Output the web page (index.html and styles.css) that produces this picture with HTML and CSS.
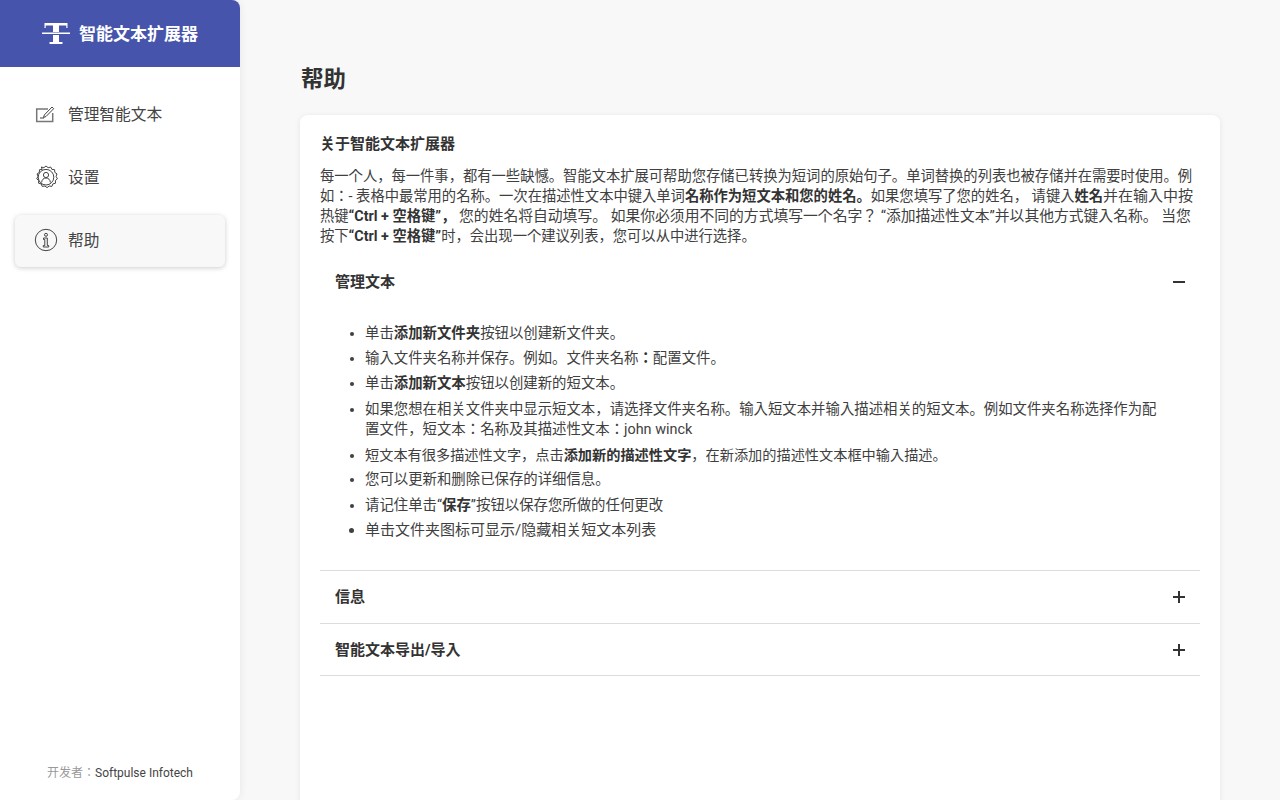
FILE: index.html
```html
<!DOCTYPE html>
<html lang="ja">
<head>
<meta charset="utf-8">
<title>智能文本扩展器</title>
<link rel="stylesheet" href="styles.css">
</head>
<body>
<div class="app">
  <aside class="sidebar">
    <div class="brand">
      <svg class="brand-icon" viewBox="0 0 28 24" width="28" height="24" aria-hidden="true">
        <path class="logo-fill" d="M2.500 1h23v5h-1.200V3.600H17v6.400h-6V3.600H3.700V6H2.500z"/>
        <path class="logo-fill" d="M0 10.500h28v1.500H0z"/>
        <path class="logo-fill" d="M11 13h6v7h3.500v2H7.500v-2H11z"/>
      </svg>
      <span class="brand-name">智能文本扩展器</span>
    </div>
    <nav class="nav">
      <a class="nav-item">
        <svg class="nav-icon" viewBox="0 0 20 20" width="20" height="20" aria-hidden="true">
          <path class="line thick" d="M13 5H1.700v12.500h16V9"/>
          <path class="line" d="M8.500 13.500l.8-2.500L17 3l1.700 1.700L11 12.500z"/>
          <path class="line" d="M5 14h4"/>
        </svg>
        <span class="nav-label">管理智能文本</span>
      </a>
      <a class="nav-item">
        <svg class="nav-icon gear" viewBox="0 0 24 24" width="24" height="24" aria-hidden="true">
          <path class="line" d="M12 1l2.100 1.700 2.600-.7 1.200 2.400 2.700.3.200 2.700 2.200 1.500-.9 2.500 1.300 2.400-2 1.700.1 2.700-2.600.7-1 2.500-2.700-.4-2.200 1.600-2.100-1.600-2.700.4-1-2.500-2.600-.7.100-2.700-2-1.700 1.300-2.400-.9-2.500 2.200-1.500.2-2.700 2.700-.3L7.300 2l2.600.7z"/>
          <circle class="line" cx="12" cy="12.200" r="7.800"/>
          <circle class="line" cx="12" cy="10" r="2.600"/>
          <path class="line" d="M7.600 17.500c.3-2.900 2-4.500 4.400-4.500s4.100 1.600 4.400 4.500"/>
        </svg>
        <span class="nav-label">设置</span>
      </a>
      <a class="nav-item active">
        <svg class="nav-icon gear" viewBox="0 0 24 24" width="24" height="24" aria-hidden="true">
          <circle class="line" cx="12" cy="12" r="10.700"/>
          <circle class="line" cx="12" cy="6.800" r="1.500"/>
          <path class="line" d="M9.500 10h3.800v7.500h1.400v1.500H9.300v-1.500h1.500v-6H9.500z"/>
        </svg>
        <span class="nav-label">帮助</span>
      </a>
    </nav>
    <footer class="credit"><span class="credit-label">开发者：</span><span>Softpulse Infotech</span></footer>
  </aside>
  <main class="main">
    <h1 class="page-title">帮助</h1>
    <section class="card">
      <h2 class="about-title">关于智能文本扩展器</h2>
      <p class="about-text">每一个人，每一件事，都有一些缺憾。智能文本扩展可帮助您存储已转换为短词的原始句子。单词替换的列表也被存储并在需要时使用。例如：- 表格中最常用的名称。一次在描述性文本中键入单词<b>名称作为短文本和您的姓名。</b>如果您填写了您的姓名， 请键入<b>姓名</b><span class="wide">并在输入中按</span>热键<b>“Ctrl + 空格键”，</b> <span class="roomy">您的姓名将自动填写。 如果你必须用不同的方式填写一个名字？ “添加描述性文本”并以其他方式键入名称。 当您</span>按下<b>“Ctrl + 空格键”</b>时，会出现一个建议列表，您可以从中进行选择。</p>
      <div class="acc open">
        <div class="acc-head">
          <span>管理文本</span>
          <svg class="acc-icon" viewBox="0 0 14 14" width="14" height="14" aria-hidden="true"><path d="M1 7h12"/></svg>
        </div>
        <ul class="acc-body">
          <li>单击<b>添加新文件夹</b>按钮以创建新文件夹。</li>
          <li>输入文件夹名称并保存。例如。文件夹名称<b>：</b>配置文件。</li>
          <li>单击<b>添加新文本</b>按钮以创建新的短文本。</li>
          <li class="two-line">如果您想在相关文件夹中显示短文本，请选择文件夹名称。输入短文本并输入描述相关的短文本。例如文件夹名称选择作为配置文件，短文本：名称及其描述性文本：john winck</li>
          <li class="tight">短文本有很多描述性文字，点击<b>添加新的描述性文字</b>，在新添加的描述性文本框中输入描述。</li>
          <li>您可以更新和删除已保存的详细信息。</li>
          <li class="after-gap">请记住单击“<b>保存</b>”按钮以保存您所做的任何更改</li>
          <li class="large">单击文件夹图标可显示/隐藏相关短文本列表</li>
        </ul>
      </div>
      <div class="acc">
        <div class="acc-head">
          <span>信息</span>
          <svg class="acc-icon" viewBox="0 0 14 14" width="14" height="14" aria-hidden="true"><path d="M1 7h12M7 1v12"/></svg>
        </div>
      </div>
      <div class="acc last">
        <div class="acc-head">
          <span>智能文本导出/导入</span>
          <svg class="acc-icon" viewBox="0 0 14 14" width="14" height="14" aria-hidden="true"><path d="M1 7h12M7 1v12"/></svg>
        </div>
      </div>
    </section>
  </main>
</div>
</body>
</html>
```
FILE: styles.css
```css
* { box-sizing: border-box; }
html, body { height: 100%; }
body {
  margin: 0;
  background: #f8f8f8;
  color: #404040;
  font-family: Roboto, "Noto Sans CJK JP", sans-serif;
  font-size: 14.4px;
  overflow: hidden;
}
.app { display: flex; height: 800px; }
.sidebar {
  width: 240px;
  flex: none;
  display: flex;
  flex-direction: column;
  background: #fff;
  border-radius: 0 8px 8px 0;
  box-shadow: 0 0 8px rgba(0,0,0,.08);
  overflow: hidden;
}
.brand {
  height: 67px;
  flex: none;
  display: flex;
  align-items: center;
  padding-left: 42px;
  gap: 9px;
  background: #4655ab;
  color: #fff;
}
.brand-icon { display: block; }
.logo-fill { fill: #fff; }
.brand-name { font-size: 17px; font-weight: 700; margin-bottom: 3px; }
.nav {
  flex: 1;
  display: flex;
  flex-direction: column;
  gap: 11px;
  padding: 22px 15px 0;
}
.nav-item {
  height: 52px;
  display: flex;
  align-items: center;
  padding-left: 20px;
  border-radius: 6px;
  font-size: 15.700px;
  color: #444;
}
.nav-label { margin-bottom: 4px; }
.nav-item.active {
  background: #f8f8f8;
  box-shadow: 0 1px 5px rgba(0,0,0,.2);
}
.nav-icon { flex: none; margin-right: 13px; margin-bottom: 2px; }
.nav-icon.gear { margin-right: 10px; margin-left: -1px; margin-bottom: 2px; width: 24px; height: 24px; }
.line { fill: none; stroke: #444; stroke-width: 1; }
.line.thick { stroke: #777; stroke-width: 1.500; }
.credit {
  height: 37px;
  flex: none;
  text-align: center;
  font-size: 12px;
  color: #444;
}
.credit-label { color: #999; }
.main { flex: 1; padding: 0 60px; min-width: 0; }
.page-title {
  margin: 0;
  padding-top: 63px;
  height: 115px;
  font-size: 22.400px;
  font-weight: 700;
  line-height: 32px;
  padding-left: 1px;
  color: #333;
}
.card {
  height: 720px;
  padding: 20px;
  background: #fff;
  border-radius: 8px;
  box-shadow: 0 1px 6px rgba(0,0,0,.08);
}
.about-title { margin: 0 0 13px; font-size: 15px; font-weight: 700; line-height: 18px; color: #333; }
.about-text { margin: 0; line-height: 20px; font-size: 14.300px; }
.wide { font-size: 15px; }
.roomy { font-size: 14.800px; }
b { font-weight: 700; color: #333; }
.acc { border-bottom: 1px solid #ddd; }
.acc.open { margin-top: 10px; }
.acc-head {
  height: 52px;
  display: flex;
  align-items: center;
  justify-content: space-between;
  padding: 0 14px 0 15px;
  font-size: 15px;
  font-weight: 700;
  color: #333;
}
.acc.last .acc-head { height: 51px; }
.acc-head span { margin-bottom: 3px; }
.acc-icon { flex: none; }
.acc-icon path { fill: none; stroke: #333; stroke-width: 2; }
.acc-body { margin: 0; padding: 16px 30px 25px 45px; line-height: 20px; }
.acc-body li { margin-bottom: 5px; }
.acc-body li.two-line { margin-top: 6px; }
.acc-body li.tight { font-size: 14.200px; }
.acc-body li.after-gap { margin-top: 6px; margin-bottom: 4px; }
.acc-body li.large { font-size: 15px; }
```
